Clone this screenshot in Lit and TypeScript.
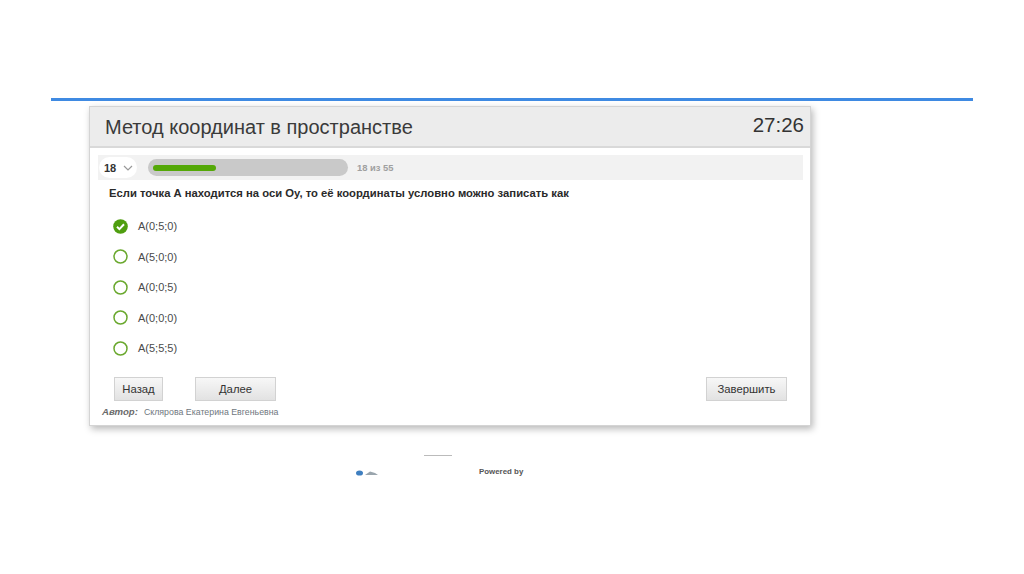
import { LitElement, html, svg, css } from "lit";
import { customElement } from "lit/decorators.js";

const OPTIONS = ["A(0;5;0)", "A(5;0;0)", "A(0;0;5)", "A(0;0;0)", "A(5;5;5)"];

@customElement("app-root")
export class AppRoot extends LitElement {
  static styles = css`
    :host { display: block; width: 1024px; height: 574px; background: #fff; overflow: hidden;
      font-family: "Liberation Sans", Arial, sans-serif; color: #333; }
    .slide { padding: 98px 51px 0; display: flex; flex-direction: column; }
    .rule { height: 3px; background: #3f8ae2; width: 922px; }
    .card { box-sizing: border-box; width: 722px; height: 320px; margin: 5px 0 0 38px; background: #fff;
      border: 1px solid #d4d4d4; box-shadow: 2px 3px 7px rgba(0,0,0,.28); display: flex; flex-direction: column; }
    .head { box-sizing: border-box; height: 41px; flex: none; background: #ececec; border-bottom: 2px solid #d9d9d9;
      display: flex; align-items: center; justify-content: space-between; padding: 0 6px 0 15px; }
    .title { font-size: 20px; color: #3a3a3a; margin-top: 2px; }
    .timer { font-size: 20.5px; color: #333; margin-top: -3px; }
    .bar { height: 25px; margin: 7px 7px 0 8px; background: #f2f2f2; display: flex; align-items: center; flex: none; }
    .num { box-sizing: border-box; width: 38px; height: 21px; margin-left: 1px; border-radius: 11px; background: #fff;
      display: flex; align-items: center; padding-left: 5px; gap: 7px; font-size: 11px; font-weight: bold; color: #333; }
    .num svg { display: block; }
    .track { width: 200px; height: 17px; margin-left: 11px; border-radius: 9px; background: #c9c9c9;
      display: flex; align-items: center; padding-left: 5px; box-sizing: border-box; }
    .fill { width: 63px; height: 6px; border-radius: 3px; background: #54a807; }
    .count { margin-left: 9px; font-size: 9.4px; font-weight: bold; color: #a0a0a0; }
    .q { margin: 6px 0 0 19px; font-size: 11.27px; line-height: 14px; font-weight: bold; color: #2a2a2a; height: 14px; flex: none; white-space: nowrap; }
    .opts { display: flex; flex-direction: column; margin: 18px 0 0 23px; gap: 14.5px; flex: none; }
    .opt { display: flex; align-items: center; gap: 10px; height: 16px; font-size: 11px; color: #4a4a4a; }
    .opt svg { display: block; flex: none; }
    .actions { display: flex; margin: 21px 23px 0 24px; flex: none; }
    button { box-sizing: border-box; height: 24px; padding: 0; font: 11.3px "Liberation Sans", Arial, sans-serif; color: #333;
      border: 1px solid #d2d2d2; background: linear-gradient(#f7f7f7, #e2e2e2); }
    .back { width: 49px; }
    .next { width: 81px; margin-left: 32px; }
    .finish { width: 81px; margin-left: auto; }
    .author { display: flex; align-items: baseline; margin: 5px 0 0 12px; font-size: 8.8px; color: #6f7780; white-space: nowrap; }
    .author b { font-size: 9.6px; font-style: italic; color: #6a6a6a; margin-right: 6px; }
    .foot { position: relative; height: 60px; }
    .dash { position: absolute; left: 373px; top: 29px; width: 28px; height: 1px; background: #bbb; }
    .logo { position: absolute; left: 304px; top: 44px; display: block; }
    .pow { position: absolute; left: 428px; top: 41px; font-size: 7.9px; font-weight: bold; color: #555; white-space: nowrap; }
  `;

  render() {
    return html`<div class="slide">
      <div class="rule"></div>
      <div class="card">
        <div class="head">
          <div class="title">Метод координат в пространстве</div>
          <div class="timer">27:26</div>
        </div>
        <div class="bar">
          <div class="num">18
            <svg width="10" height="6" viewBox="0 0 10 6"><path d="M1 1l4 4 4-4" fill="none" stroke="#999" stroke-width="1.2"/></svg>
          </div>
          <div class="track"><div class="fill"></div></div>
          <div class="count">18 из 55</div>
        </div>
        <div class="q">Если точка А находится на оси Оу, то её координаты условно можно записать как</div>
        <div class="opts">
          ${OPTIONS.map((o, i) => html`<div class="opt">
            <svg width="15" height="15" viewBox="0 0 15 15">
              ${i === 0
                ? svg`<circle cx="7.5" cy="7.5" r="7.3" fill="#4f9e0f"/><path d="M4 7.8l2.4 2.3L11 5.3" fill="none" stroke="#fff" stroke-width="2"/>`
                : svg`<circle cx="7.5" cy="7.5" r="6.5" fill="#fff" stroke="#6aa82e" stroke-width="1.5"/>`}
            </svg>
            <span>${o}</span>
          </div>`)}
        </div>
        <div class="actions">
          <button class="back">Назад</button>
          <button class="next">Далее</button>
          <button class="finish">Завершить</button>
        </div>
        <div class="author"><b>Автор:</b><span>Склярова Екатерина Евгеньевна</span></div>
      </div>
      <div class="foot">
        <div class="dash"></div>
        <svg class="logo" width="24" height="6" viewBox="0 0 24 6">
          <ellipse cx="4.5" cy="3" rx="3.5" ry="2.6" fill="#3f7fc0"/>
          <path d="M10 5l5-3.5 5 1.5 3 2z" fill="#9aa5ad"/>
        </svg>
        <div class="pow">Powered by</div>
      </div>
    </div>`;
  }
}
